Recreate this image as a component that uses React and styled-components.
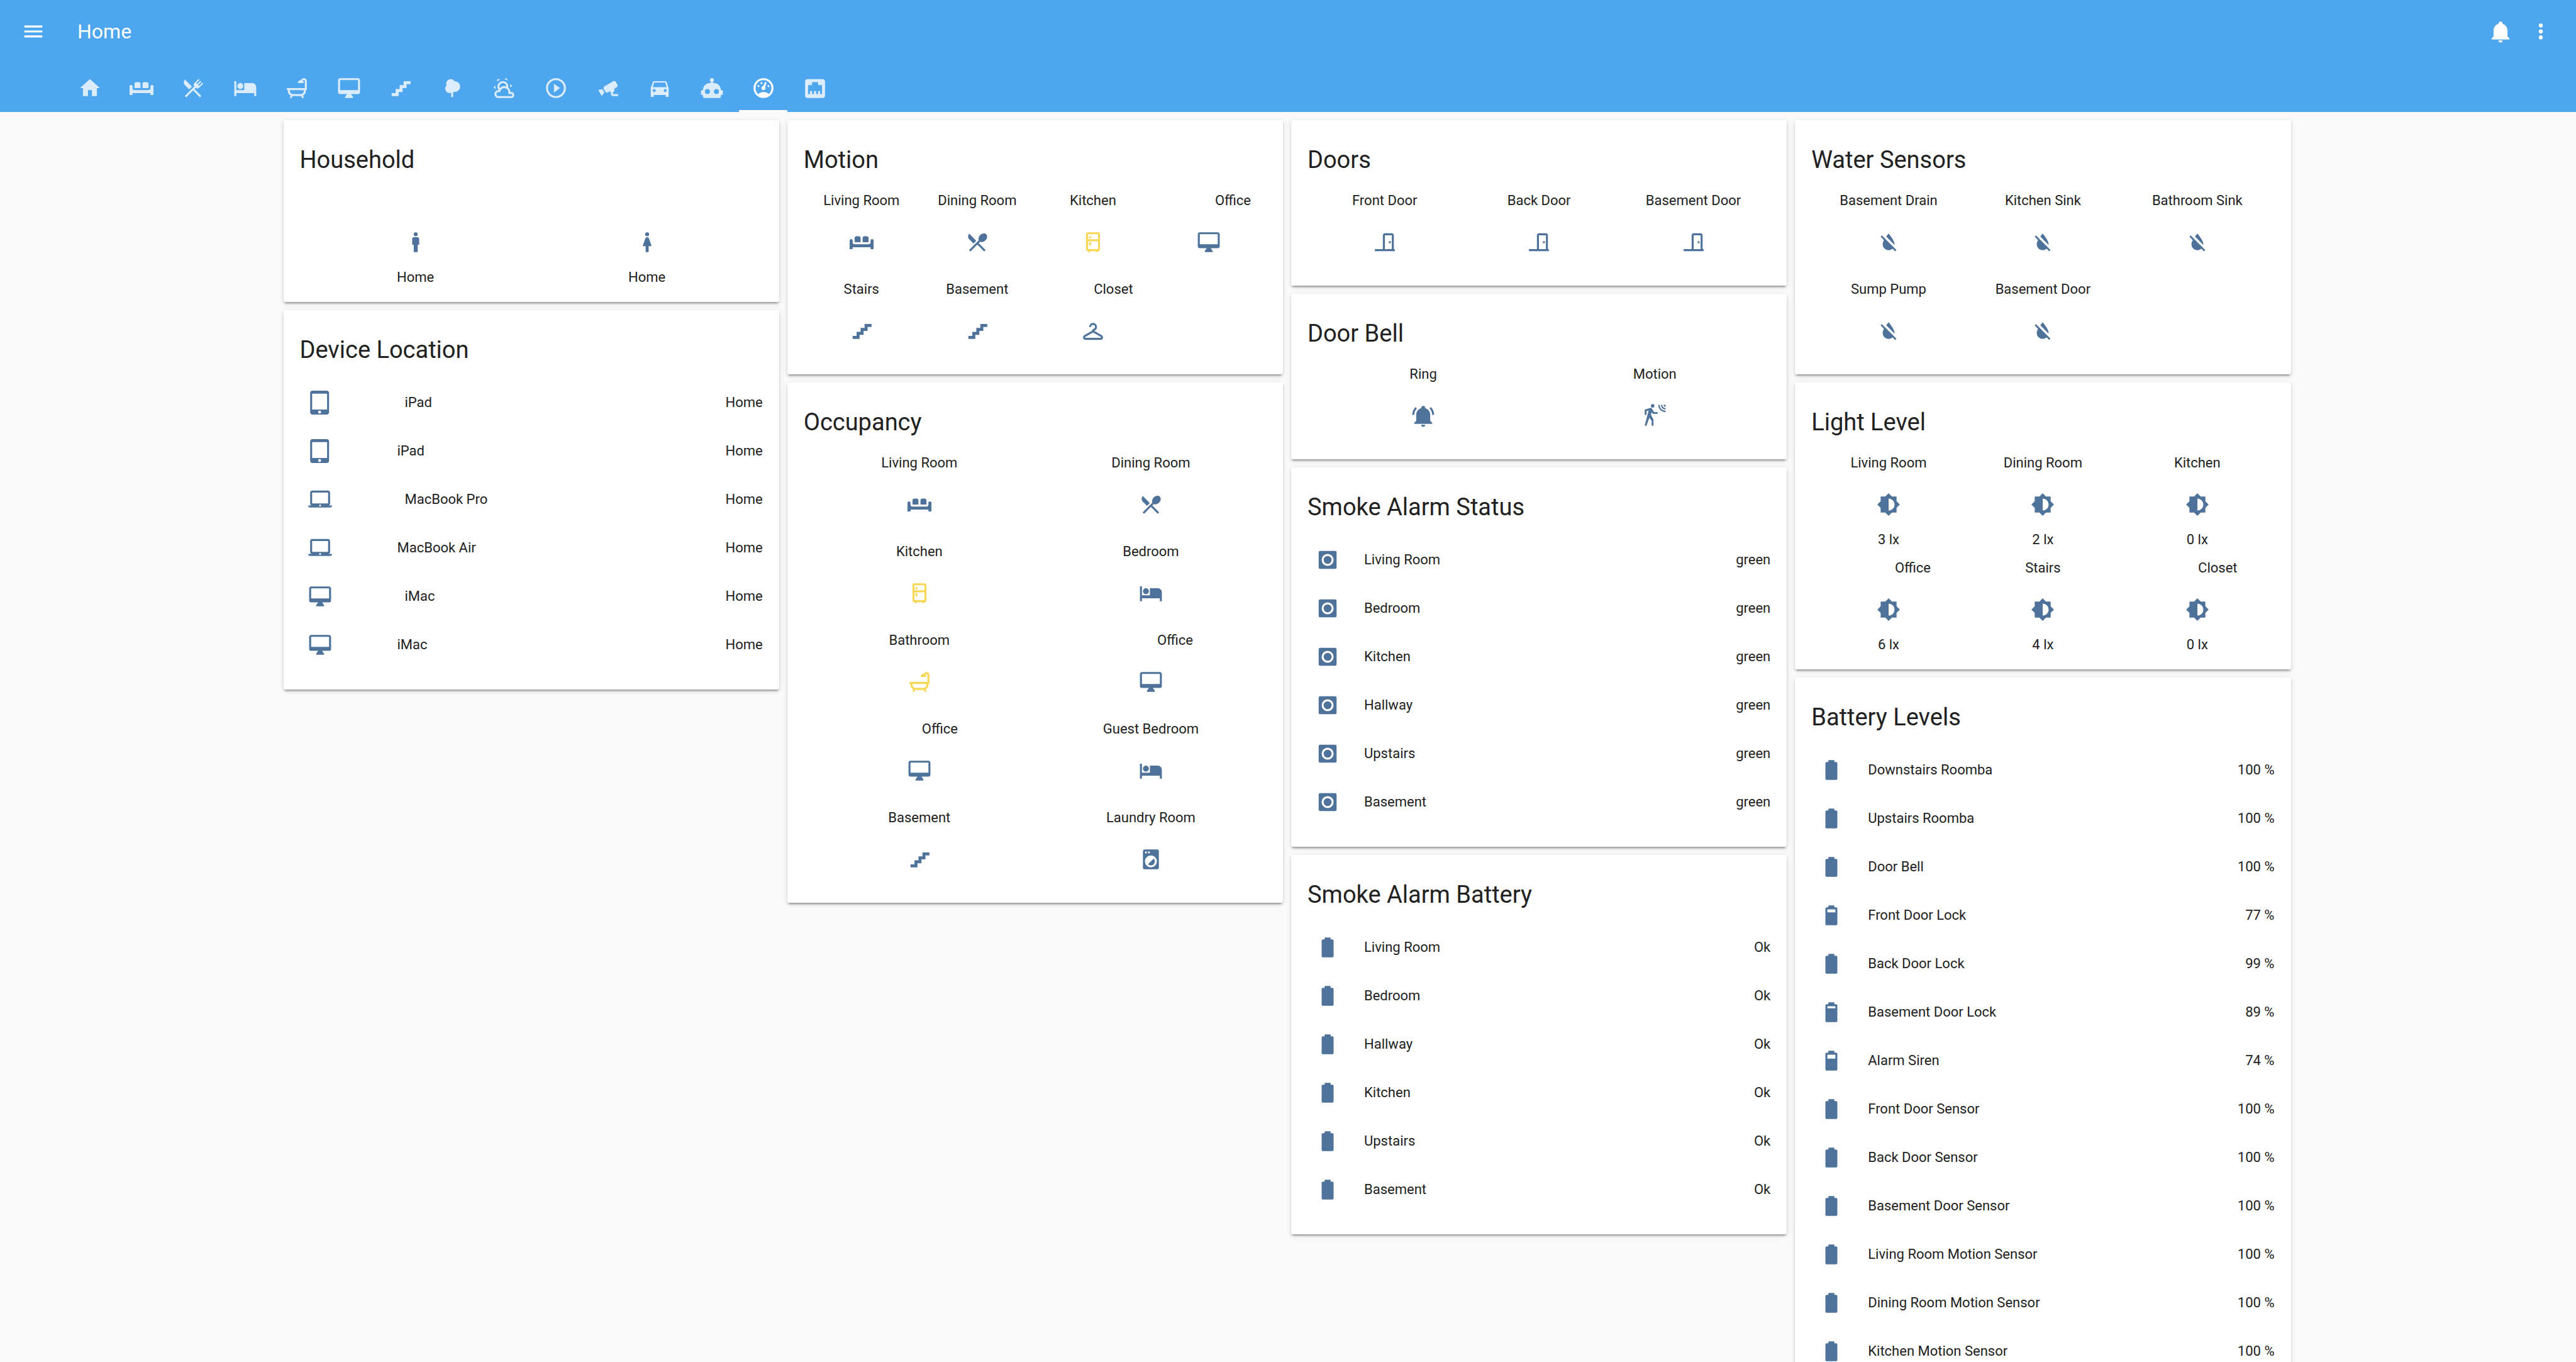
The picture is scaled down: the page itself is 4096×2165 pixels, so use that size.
import React from "react";
import styled, { createGlobalStyle } from "styled-components";

const GlobalStyle = createGlobalStyle`
  *, *::before, *::after { box-sizing: border-box; }
  html, body, #root { height: 100%; }
  body {
    margin: 0;
    background: #fafafa;
    color: #212121;
    font-family: Roboto, "Noto Sans", sans-serif;
    font-size: 22px;
    line-height: 26px;
  }
`;

/* ---------- icon paths, 24 x 24 grid ---------- */

const bellShape =
  "M21,19V20H3V19L5,17V11C5,7.9 7.03,5.17 10,4.29C10,4.19 10,4.1 10,4A2,2 0 0,1 12,2A2,2 0 0,1 14,4C14,4.1 14,4.19 14,4.29C16.97,5.17 19,7.9 19,11V17L21,19M14,21A2,2 0 0,1 12,23A2,2 0 0,1 10,21";
const batteryShape =
  "M16.67,4H15V2H9V4H7.33A1.33,1.33 0 0,0 6,5.33V20.67C6,21.4 6.6,22 7.33,22H16.67A1.33,1.33 0 0,0 18,20.67V5.33C18,4.6 17.4,4 16.67,4Z";

const paths = {
  menu: "M3,6H21V8H3V6M3,11H21V13H3V11M3,16H21V18H3V16Z",
  bell: bellShape,
  dots: "M12,16A2,2 0 0,1 14,18A2,2 0 0,1 12,20A2,2 0 0,1 10,18A2,2 0 0,1 12,16M12,10A2,2 0 0,1 14,12A2,2 0 0,1 12,14A2,2 0 0,1 10,12A2,2 0 0,1 12,10M12,4A2,2 0 0,1 14,6A2,2 0 0,1 12,8A2,2 0 0,1 10,6A2,2 0 0,1 12,4Z",
  home: "M10,20V14H14V20H19V12H22L12,3L2,12H5V20H10Z",
  sofa: "M7,6H9A2,2 0 0,1 11,8V12H5V8A2,2 0 0,1 7,6M15,6H17A2,2 0 0,1 19,8V12H13V8A2,2 0 0,1 15,6M1,9H2A1,1 0 0,1 3,10V12A2,2 0 0,0 5,14H19A2,2 0 0,0 21,12V10A1,1 0 0,1 22,9H23A1,1 0 0,1 24,10V19H21V17H3V19H0V10A1,1 0 0,1 1,9Z",
  fork: "M8.1,13.34L3.91,9.16C2.35,7.59 2.35,5.06 3.91,3.5L10.93,10.5L8.1,13.34M13.41,13L20.29,19.88L18.88,21.29L12,14.41L5.12,21.29L3.71,19.88L13.36,10.22L13.16,10C12.38,9.23 12.38,7.97 13.16,7.19L17.5,2.82L18.43,3.74L15.19,7L16.15,7.94L19.39,4.69L20.31,5.61L17.06,8.85L18,9.81L21.26,6.56L22.18,7.5L17.81,11.84C17.03,12.62 15.77,12.62 15,11.84L14.78,11.64L13.41,13Z",
  spoon: "M8.1,13.34L3.91,9.16C2.35,7.59 2.35,5.06 3.91,3.5L10.93,10.5L8.1,13.34M14.88,11.53L13.41,13L20.29,19.88L18.88,21.29L12,14.41L5.12,21.29L3.71,19.88L13.47,10.12C12.76,8.59 13.26,6.44 14.85,4.85C16.76,2.93 19.5,2.57 20.96,4.03C22.43,5.5 22.07,8.24 20.15,10.15C18.56,11.74 16.41,12.24 14.88,11.53Z",
  bed: "M19,7H11V14H3V5H1V20H3V17H21V20H23V11A4,4 0 0,0 19,7M7,13A3,3 0 0,0 10,10A3,3 0 0,0 7,7A3,3 0 0,0 4,10A3,3 0 0,0 7,13Z",
  bath: "M21,14V15C21,16.91 19.93,18.57 18.35,19.41L19,22H17L16.5,20C16.33,20 16.17,20 16,20H8C7.83,20 7.67,20 7.5,20L7,22H5L5.65,19.41C4.07,18.57 3,16.91 3,15V14H2V12H20V5A1,1 0 0,0 19,4C18.5,4 18.12,4.34 18,4.79C18.63,5.33 19,6.13 19,7H13A3,3 0 0,1 16,4H16.17C16.58,2.84 17.69,2 19,2A3,3 0 0,1 22,5V14H21M19,14H5V15A3,3 0 0,0 8,18H16A3,3 0 0,0 19,15V14Z",
  desktop: "M21,14H3V4H21M21,2H3C1.89,2 1,2.89 1,4V16A2,2 0 0,0 3,18H10L8,21V22H16V21L14,18H21A2,2 0 0,0 23,16V4C23,2.89 22.1,2 21,2Z",
  stairs: "M15,5V9H11V13H7V17H3V20H10V16H14V12H18V8H22V5H15Z",
  tree: "M11,21V16.74C10.53,16.91 10.03,17 9.5,17C7,17 5,15 5,12.5C5,11.23 5.5,10.09 6.36,9.27C6.13,8.73 6,8.13 6,7.5C6,5 8,3 10.5,3C12.06,3 13.45,3.8 14.25,5H14.5A5.5,5.5 0 0,1 20,10.5A5.5,5.5 0 0,1 14.5,16C14,16 13.5,15.93 13,15.79V21H11Z",
  weather: "M12.74,5.47C15.1,6.5 16.35,9.03 15.92,11.46C17.19,12.56 18,14.19 18,16V16.17C18.31,16.06 18.65,16 19,16A3,3 0 0,1 22,19A3,3 0 0,1 19,22H6A4,4 0 0,1 2,18A4,4 0 0,1 6,14H6.27C5,12.45 4.6,10.24 5.5,8.26C6.72,5.5 9.97,4.24 12.74,5.47M11.93,7.3C10.16,6.5 8.09,7.31 7.31,9.07C6.85,10.09 6.93,11.22 7.41,12.13C8.5,10.83 10.16,10 12,10C12.7,10 13.38,10.12 14,10.34C13.94,9.06 13.18,7.86 11.93,7.3M13.55,3.64C13,3.4 12.45,3.23 11.88,3.12L14.37,1.82L15.27,4.71C14.76,4.29 14.19,3.93 13.55,3.64M6.09,4.44C5.6,4.79 5.17,5.19 4.8,5.63L4.91,2.82L7.87,3.5C7.25,3.71 6.65,4.03 6.09,4.44M18,9.71C17.91,9.12 17.78,8.55 17.59,8L19.97,9.5L17.92,11.73C18.03,11.08 18.05,10.4 18,9.71M3.04,11.3C3.11,11.9 3.24,12.47 3.43,13L1.06,11.5L3.1,9.28C3,9.93 2.97,10.61 3.04,11.3M19,18H16V16A4,4 0 0,0 12,12A4,4 0 0,0 8,16H6A2,2 0 0,0 4,18A2,2 0 0,0 6,20H19A1,1 0 0,0 20,19A1,1 0 0,0 19,18Z",
  play: "M12,20C7.59,20 4,16.41 4,12C4,7.59 7.59,4 12,4C16.41,4 20,7.59 20,12C20,16.41 16.41,20 12,20M12,2A10,10 0 0,0 2,12A10,10 0 0,0 12,22A10,10 0 0,0 22,12A10,10 0 0,0 12,2M10,16.5L16,12L10,7.5V16.5Z",
  cctv: "M18.15,4.94C17.77,4.91 17.37,5 17,5.2L8.35,10.2C7.39,10.76 7.07,12 7.62,12.94L9.12,15.53C9.67,16.5 10.89,16.82 11.85,16.27L13.65,15.23C13.92,15.69 14.32,16.06 14.81,16.27V18.04C14.81,19.13 15.7,20 16.81,20H22V18.04H16.81V16.27C17.72,15.87 18.31,14.97 18.31,14C18.31,13.54 18.19,13.11 17.97,12.73L20.5,11.27C21.47,10.71 21.8,9.5 21.24,8.53L19.74,5.94C19.4,5.34 18.79,5 18.15,4.94M6.22,13.17L2,13.87L2.75,15.17L4.75,18.63L5.5,19.93L8.22,16.63L6.22,13.17Z",
  car: "M5,11L6.5,6.5H17.5L19,11M17.5,16A1.5,1.5 0 0,1 16,14.5A1.5,1.5 0 0,1 17.5,13A1.5,1.5 0 0,1 19,14.5A1.5,1.5 0 0,1 17.5,16M6.5,16A1.5,1.5 0 0,1 5,14.5A1.5,1.5 0 0,1 6.5,13A1.5,1.5 0 0,1 8,14.5A1.5,1.5 0 0,1 6.5,16M18.92,6C18.72,5.42 18.16,5 17.5,5H6.5C5.84,5 5.28,5.42 5.08,6L3,12V20A1,1 0 0,0 4,21H5A1,1 0 0,0 6,20V19H18V20A1,1 0 0,0 19,21H20A1,1 0 0,0 21,20V12L18.92,6Z",
  robot: "M12,2A2,2 0 0,1 14,4C14,4.74 13.6,5.39 13,5.73V7H14A7,7 0 0,1 21,14H22A1,1 0 0,1 23,15V18A1,1 0 0,1 22,19H21V20A2,2 0 0,1 19,22H5A2,2 0 0,1 3,20V19H2A1,1 0 0,1 1,18V15A1,1 0 0,1 2,14H3A7,7 0 0,1 10,7H11V5.73C10.4,5.39 10,4.74 10,4A2,2 0 0,1 12,2M7.5,13A2.5,2.5 0 0,0 5,15.5A2.5,2.5 0 0,0 7.5,18A2.5,2.5 0 0,0 10,15.5A2.5,2.5 0 0,0 7.5,13M16.5,13A2.5,2.5 0 0,0 14,15.5A2.5,2.5 0 0,0 16.5,18A2.5,2.5 0 0,0 19,15.5A2.5,2.5 0 0,0 16.5,13Z",
  gauge: "M17.3,18C19,16.5 20,14.4 20,12A8,8 0 0,0 12,4A8,8 0 0,0 4,12C4,14.4 5,16.5 6.7,18C8.2,16.7 10,16 12,16C14,16 15.9,16.7 17.3,18M12,2A10,10 0 0,1 22,12A10,10 0 0,1 12,22A10,10 0 0,1 2,12A10,10 0 0,1 12,2M7,9A1,1 0 0,1 8,10A1,1 0 0,1 7,11A1,1 0 0,1 6,10A1,1 0 0,1 7,9M10,6A1,1 0 0,1 11,7A1,1 0 0,1 10,8A1,1 0 0,1 9,7A1,1 0 0,1 10,6M17,9A1,1 0 0,1 18,10A1,1 0 0,1 17,11A1,1 0 0,1 16,10A1,1 0 0,1 17,9M14.4,6.1C14.9,6.3 15.1,6.9 15,7.4L13.6,10.8C13.8,11.1 14,11.5 14,12A2,2 0 0,1 12,14A2,2 0 0,1 10,12C10,11 10.7,10.1 11.7,10L13.1,6.7C13.3,6.1 13.9,5.9 14.4,6.1Z",
  ethernet: "M7,15H9V18H11V15H13V18H15V15H17V18H19V9H15V6H9V9H5V18H7V15M4.38,3H19.63C20.94,3 22,4.06 22,5.38V19.63A2.37,2.37 0 0,1 19.63,22H4.38C3.06,22 2,20.94 2,19.63V5.38C2,4.06 3.06,3 4.38,3Z",
  fridge: "M9,21V22H7V21A2,2 0 0,1 5,19V4A2,2 0 0,1 7,2H17A2,2 0 0,1 19,4V19A2,2 0 0,1 17,21V22H15V21H9M7,4V9H17V4H7M7,19H17V11H7V19M8,12H10V15H8V12M8,6H10V8H8V6Z",
  hanger: "M20.76,16.34H20.75C21.5,16.77 22,17.58 22,18.5A2.5,2.5 0 0,1 19.5,21H4.5A2.5,2.5 0 0,1 2,18.5C2,17.58 2.5,16.77 3.25,16.34H3.24L11,11.86C11,11.86 11,11 12,10C13,10 14,9.1 14,8A2,2 0 0,0 12,6A2,2 0 0,0 10,8H8A4,4 0 0,1 12,4A4,4 0 0,1 16,8C16,9.86 14.73,11.42 13,11.87L20.76,16.34M4.5,19V19H19.5V19C19.67,19 19.84,18.91 19.93,18.75C20.07,18.5 20,18.21 19.75,18.07L12,13.59L4.25,18.07C4,18.21 3.93,18.5 4.07,18.75C4.16,18.91 4.33,19 4.5,19Z",
  male: "M12,2A2,2 0 0,1 14,4A2,2 0 0,1 12,6A2,2 0 0,1 10,4A2,2 0 0,1 12,2M10.5,7H13.5A2,2 0 0,1 15.5,9V14.5H14V22H10V14.5H8.5V9A2,2 0 0,1 10.5,7Z",
  female: "M12,2A2,2 0 0,1 14,4A2,2 0 0,1 12,6A2,2 0 0,1 10,4A2,2 0 0,1 12,2M10.5,22V16H7.5L10.09,8.41C10.34,7.59 11.1,7 12,7C12.9,7 13.66,7.59 13.91,8.41L16.5,16H13.5V22H10.5Z",
  tablet: "M19,19H4V3H19M11.5,23A1.5,1.5 0 0,1 10,21.5A1.5,1.5 0 0,1 11.5,20A1.5,1.5 0 0,1 13,21.5A1.5,1.5 0 0,1 11.5,23M18.5,0H4.5A2.5,2.5 0 0,0 2,2.5V21.5A2.5,2.5 0 0,0 4.5,24H18.5A2.5,2.5 0 0,0 21,21.5V2.5A2.5,2.5 0 0,0 18.5,0Z",
  laptop: "M12,19A1,1 0 0,1 11,18A1,1 0 0,1 12,17A1,1 0 0,1 13,18A1,1 0 0,1 12,19M4,5H20V16H4M20,18A2,2 0 0,0 22,16V5C22,3.89 21.1,3 20,3H4C2.89,3 2,3.89 2,5V16A2,2 0 0,0 4,18H0A2,2 0 0,0 2,20H22A2,2 0 0,0 24,18H20Z",
  washer: "M14.83,11.17C16.39,12.73 16.39,15.27 14.83,16.83C13.27,18.39 10.73,18.39 9.17,16.83L14.83,11.17M6,2H18A2,2 0 0,1 20,4V20A2,2 0 0,1 18,22H6A2,2 0 0,1 4,20V4A2,2 0 0,1 6,2M7,4A1,1 0 0,0 6,5A1,1 0 0,0 7,6A1,1 0 0,0 8,5A1,1 0 0,0 7,4M10,4A1,1 0 0,0 9,5A1,1 0 0,0 10,6A1,1 0 0,0 11,5A1,1 0 0,0 10,4M12,8A6,6 0 0,0 6,14A6,6 0 0,0 12,20A6,6 0 0,0 18,14A6,6 0 0,0 12,8Z",
  door: "M16,11H18V13H16V11M12,3H19C20.11,3 21,3.89 21,5V19H22V21H2V19H10V5C10,3.89 10.89,3 12,3M12,5V19H19V5H12Z",
  bellRing:
    bellShape +
    "M19.75,3.19L18.33,4.61C20.04,6.3 21,8.6 21,11H23C23,8.07 21.84,5.25 19.75,3.19M1,11H3C3,8.6 3.96,6.3 5.67,4.61L4.25,3.19C2.16,5.25 1,8.07 1,11Z",
  motion: "M10,0.2C9,0.2 8.2,1 8.2,2C8.2,3 9,3.8 10,3.8C11,3.8 11.8,3 11.8,2C11.8,1 11,0.2 10,0.2M15.67,1A7.33,7.33 0 0,0 23,8.33V7A6,6 0 0,1 17,1H15.67M18.33,1C18.33,3.58 20.42,5.67 23,5.67V4.33C21.16,4.33 19.67,2.84 19.67,1H18.33M21,1A2,2 0 0,0 23,3V1H21M7.92,4.03C7.75,4.03 7.58,4.06 7.42,4.11L2,5.8V11H3.8V7.33L5.91,6.67L2,22H3.8L6.67,13.89L9,17V22H10.8V15.59L8.31,11.05L9.04,8.18L10.12,10H15V8.2H11.38L9.38,4.87C9.08,4.37 8.54,4.03 7.92,4.03Z",
  waterOff: "M17.12,17.12L12.5,12.5L5.27,5.27L4,6.55L7.32,9.87C6.55,11.32 6,12.79 6,14A6,6 0 0,0 12,20C13.5,20 14.9,19.43 15.96,18.5L18.59,21.13L19.86,19.86L17.12,17.12M18,14C18,10 12,3.25 12,3.25C12,3.25 10.84,4.55 9.55,6.35L17.86,14.66C17.95,14.44 18,14.22 18,14Z",
  brightness: "M12,18V6A6,6 0 0,1 18,12A6,6 0 0,1 12,18M20,15.31L23.31,12L20,8.69V4H15.31L12,0.69L8.69,4H4V8.69L0.69,12L4,15.31V20H8.69L12,23.31L15.31,20H20V15.31Z",
  smoke: "M4.5,3H19.5A1.5,1.5 0 0,1 21,4.5V19.5A1.5,1.5 0 0,1 19.5,21H4.5A1.5,1.5 0 0,1 3,19.5V4.5A1.5,1.5 0 0,1 4.5,3M12,6A6,6 0 0,0 12,18A6,6 0 0,0 12,6M12,8A4,4 0 0,1 12,16A4,4 0 0,1 12,8Z",
  battery: batteryShape,
  battery90: batteryShape + "M8,6H16V8H8Z",
  battery80: batteryShape + "M8,6H16V9H8Z",
  battery70: batteryShape + "M8,6H16V10H8Z",
};

const Svg = styled.svg`
  display: block;
  flex: none;
  width: 38px;
  height: 38px;
  fill: currentColor;
`;

const Icon = ({ name }) => (
  <Svg viewBox="0 0 24 24" aria-hidden="true">
    <path d={paths[name]} />
  </Svg>
);

/* ---------- layout ---------- */

const Page = styled.div`
  display: flex;
  flex-direction: column;
  height: 100vh;
`;

const Header = styled.header`
  flex: none;
  background: #4ea7ee;
  color: #fff;
`;

const Toolbar = styled.div`
  display: flex;
  align-items: center;
  height: 101px;
  padding: 0 24px 2px 21px;
`;

const IconButton = styled.button`
  display: grid;
  place-items: center;
  width: 64px;
  height: 64px;
  padding: 0;
  border: 0;
  background: none;
  color: inherit;
  cursor: pointer;
`;

const PageTitle = styled.h1`
  flex: 1;
  margin: 0 0 0 38px;
  font-size: 32px;
  font-weight: 400;
  line-height: 38px;
`;

const Tabs = styled.nav`
  display: flex;
  justify-content: space-between;
  width: 1231px;
  max-width: 100%;
  margin-left: 104px;
`;

const Tab = styled.button`
  display: grid;
  place-items: center;
  width: 77px;
  height: 77px;
  padding: 0;
  border: 0;
  background: none;
  box-shadow: ${(p) => (p.$active ? "inset 0 -3px #fff" : "none")};
  color: ${(p) => (p.$active ? "#fff" : "rgba(255, 255, 255, 0.8)")};
  cursor: pointer;
`;

const Main = styled.main`
  flex: 1;
  min-height: 0;
  padding: 13px 3px 13px 0;
  overflow-y: auto;
  scrollbar-width: none;
`;

const Columns = styled.div`
  display: grid;
  grid-template-columns: repeat(4, minmax(0, 1fr));
  align-items: start;
  gap: 13px;
  max-width: 3192px;
  margin: 0 auto;
`;

const Column = styled.div`
  display: grid;
  gap: 13px;
`;

const CardBox = styled.section`
  border-radius: 3px;
  background: #fff;
  box-shadow: 0 3px 3px rgba(0, 0, 0, 0.14), 0 2px 8px rgba(0, 0, 0, 0.12),
    0 5px 2px -3px rgba(0, 0, 0, 0.2);
`;

const CardTitle = styled.h2`
  margin: 0;
  padding: 38px 26px 26px;
  font-size: 38px;
  font-weight: 400;
  line-height: 51px;
`;

/* room left in front of a name for its hidden owner */
const ownerSpace = { long: "77px", short: "65px" };

const Glance = styled.div`
  display: grid;
  grid-template-columns: repeat(${(p) => p.$columns}, minmax(0, 1fr));
  padding: 0 26px 7px;
`;

const GlanceItem = styled.div`
  display: flex;
  flex-direction: column;
  align-items: center;
  margin-bottom: 19px;
`;

const GlanceName = styled.span`
  min-height: 26px;
  padding-left: ${(p) => ownerSpace[p.$owner] || 0};
  white-space: nowrap;
`;

const GlanceIcon = styled.span`
  padding: 34px 0 24px;
  color: ${(p) => (p.$on ? "#f8d757" : "#4f729b")};
`;

const Rows = styled.ul`
  margin: 0;
  padding: 0 26px 26px;
  list-style: none;
`;

const Row = styled.li`
  display: flex;
  align-items: center;
  height: 64px;
  margin-bottom: 13px;
`;

const RowIcon = styled.span`
  display: grid;
  place-items: center;
  width: 64px;
  height: 64px;
  margin-right: 26px;
  color: #4f729b;
`;

const RowName = styled.span`
  flex: 1;
  padding-left: ${(p) => ownerSpace[p.$owner] || 0};
`;

/* ---------- cards ---------- */

const GlanceCard = ({ title, columns, items }) => (
  <CardBox>
    <CardTitle>{title}</CardTitle>
    <Glance $columns={columns}>
      {items.map((item, i) => (
        <GlanceItem key={i}>
          <GlanceName $owner={item.owner}>{item.name}</GlanceName>
          <GlanceIcon $on={item.on}>
            <Icon name={item.icon} />
          </GlanceIcon>
          {item.state && <span>{item.state}</span>}
        </GlanceItem>
      ))}
    </Glance>
  </CardBox>
);

const EntitiesCard = ({ title, items }) => (
  <CardBox>
    <CardTitle>{title}</CardTitle>
    <Rows>
      {items.map((item, i) => (
        <Row key={i}>
          <RowIcon>
            <Icon name={item.icon} />
          </RowIcon>
          <RowName $owner={item.owner}>{item.name}</RowName>
          <span>{item.state}</span>
        </Row>
      ))}
    </Rows>
  </CardBox>
);

/* ---------- data ---------- */

const tabs = [
  ["home", "Home"],
  ["sofa", "Living room"],
  ["fork", "Dining room"],
  ["bed", "Bedroom"],
  ["bath", "Bathroom"],
  ["desktop", "Office"],
  ["stairs", "Basement"],
  ["tree", "Outside"],
  ["weather", "Weather"],
  ["play", "Media"],
  ["cctv", "Cameras"],
  ["car", "Car"],
  ["robot", "Automation"],
  ["gauge", "Sensors"],
  ["ethernet", "Network"],
];

const household = [
  { icon: "male", state: "Home" },
  { icon: "female", state: "Home" },
];

const devices = [
  { name: "iPad", icon: "tablet", owner: "long", state: "Home" },
  { name: "iPad", icon: "tablet", owner: "short", state: "Home" },
  { name: "MacBook Pro", icon: "laptop", owner: "long", state: "Home" },
  { name: "MacBook Air", icon: "laptop", owner: "short", state: "Home" },
  { name: "iMac", icon: "desktop", owner: "long", state: "Home" },
  { name: "iMac", icon: "desktop", owner: "short", state: "Home" },
];

const motion = [
  { name: "Living Room", icon: "sofa" },
  { name: "Dining Room", icon: "spoon" },
  { name: "Kitchen", icon: "fridge", on: true },
  { name: "Office", icon: "desktop", owner: "long" },
  { name: "Stairs", icon: "stairs" },
  { name: "Basement", icon: "stairs" },
  { name: "Closet", icon: "hanger", owner: "short" },
];

const occupancy = [
  { name: "Living Room", icon: "sofa" },
  { name: "Dining Room", icon: "spoon" },
  { name: "Kitchen", icon: "fridge", on: true },
  { name: "Bedroom", icon: "bed" },
  { name: "Bathroom", icon: "bath", on: true },
  { name: "Office", icon: "desktop", owner: "long" },
  { name: "Office", icon: "desktop", owner: "short" },
  { name: "Guest Bedroom", icon: "bed" },
  { name: "Basement", icon: "stairs" },
  { name: "Laundry Room", icon: "washer" },
];

const doors = ["Front Door", "Back Door", "Basement Door"].map((name) => ({ name, icon: "door" }));

const doorBell = [
  { name: "Ring", icon: "bellRing" },
  { name: "Motion", icon: "motion" },
];

const smokeStatus = ["Living Room", "Bedroom", "Kitchen", "Hallway", "Upstairs", "Basement"].map(
  (name) => ({ name, icon: "smoke", state: "green" })
);

const smokeBattery = ["Living Room", "Bedroom", "Hallway", "Kitchen", "Upstairs", "Basement"].map(
  (name) => ({ name, icon: "battery", state: "Ok" })
);

const water = ["Basement Drain", "Kitchen Sink", "Bathroom Sink", "Sump Pump", "Basement Door"].map(
  (name) => ({ name, icon: "waterOff" })
);

const light = [
  { name: "Living Room", state: "3 lx" },
  { name: "Dining Room", state: "2 lx" },
  { name: "Kitchen", state: "0 lx" },
  { name: "Office", state: "6 lx", owner: "long" },
  { name: "Stairs", state: "4 lx" },
  { name: "Closet", state: "0 lx", owner: "short" },
].map((item) => ({ ...item, icon: "brightness" }));

const batteryIcon = (level) => {
  if (level >= 95) return "battery";
  if (level >= 85) return "battery90";
  return level >= 75 ? "battery80" : "battery70";
};

const batteries = [
  ["Downstairs Roomba", 100],
  ["Upstairs Roomba", 100],
  ["Door Bell", 100],
  ["Front Door Lock", 77],
  ["Back Door Lock", 99],
  ["Basement Door Lock", 89],
  ["Alarm Siren", 74],
  ["Front Door Sensor", 100],
  ["Back Door Sensor", 100],
  ["Basement Door Sensor", 100],
  ["Living Room Motion Sensor", 100],
  ["Dining Room Motion Sensor", 100],
  ["Kitchen Motion Sensor", 100],
].map(([name, level]) => ({ name, icon: batteryIcon(level), state: `${level} %` }));

export default function App() {
  return (
    <Page>
      <GlobalStyle />
      <Header>
        <Toolbar>
          <IconButton aria-label="Menu">
            <Icon name="menu" />
          </IconButton>
          <PageTitle>Home</PageTitle>
          <IconButton aria-label="Notifications">
            <Icon name="bell" />
          </IconButton>
          <IconButton aria-label="More">
            <Icon name="dots" />
          </IconButton>
        </Toolbar>
        <Tabs>
          {tabs.map(([icon, label]) => (
            <Tab key={icon} aria-label={label} $active={icon === "gauge"}>
              <Icon name={icon} />
            </Tab>
          ))}
        </Tabs>
      </Header>
      <Main>
        <Columns>
          <Column>
            <GlanceCard title="Household" columns={2} items={household} />
            <EntitiesCard title="Device Location" items={devices} />
          </Column>
          <Column>
            <GlanceCard title="Motion" columns={4} items={motion} />
            <GlanceCard title="Occupancy" columns={2} items={occupancy} />
          </Column>
          <Column>
            <GlanceCard title="Doors" columns={3} items={doors} />
            <GlanceCard title="Door Bell" columns={2} items={doorBell} />
            <EntitiesCard title="Smoke Alarm Status" items={smokeStatus} />
            <EntitiesCard title="Smoke Alarm Battery" items={smokeBattery} />
          </Column>
          <Column>
            <GlanceCard title="Water Sensors" columns={3} items={water} />
            <GlanceCard title="Light Level" columns={3} items={light} />
            <EntitiesCard title="Battery Levels" items={batteries} />
          </Column>
        </Columns>
      </Main>
    </Page>
  );
}
